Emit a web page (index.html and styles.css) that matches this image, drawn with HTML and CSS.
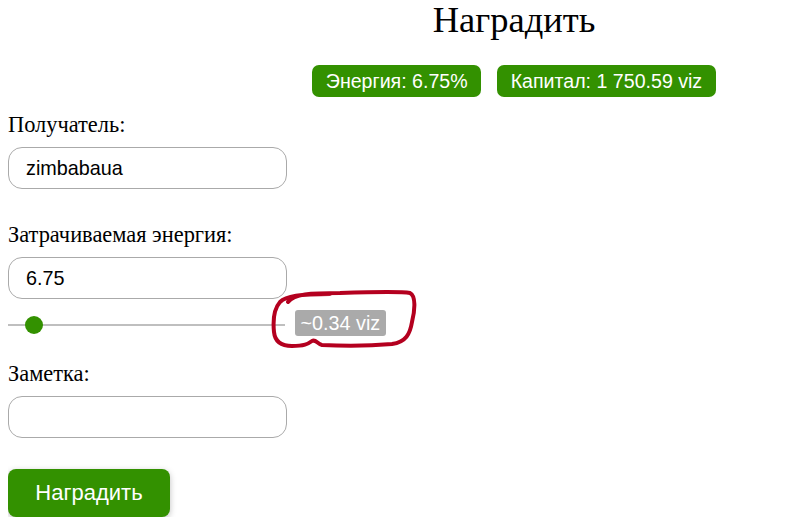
FILE: index.html
```html
<!DOCTYPE html>
<html lang="ru">
<head>
<meta charset="utf-8">
<title>Наградить</title>
<link rel="stylesheet" href="styles.css">
</head>
<body>
<header class="head">
  <h1 class="title">Наградить</h1>
  <div class="badges">
    <span class="badge">Энергия: 6.75%</span>
    <span class="badge">Капитал: 1 750.59 viz</span>
  </div>
</header>
<form class="form">
  <label class="label">Получатель:</label>
  <input class="field" type="text" value="zimbabaua">
  <label class="label label-gap">Затрачиваемая энергия:</label>
  <input class="field" type="text" value="6.75">
  <div class="slider-row">
    <div class="slider">
      <div class="track"></div>
      <div class="thumb"></div>
    </div>
    <span class="amount">~0.34 viz</span>
    <svg class="scribble" width="150" height="66" viewBox="0 0 150 66">
      <path d="M18 14 C 24 6, 40 5, 70 5 C 100 4, 130 3, 140 5 C 146 8, 145 22, 142 34 C 140 46, 136 54, 122 56 C 100 58, 70 58, 52 57 C 47 56, 46 51, 42 53 C 38 56, 34 58, 22 58 C 12 58, 5 54, 4 44 C 3 34, 3 22, 10 14 C 16 8, 30 6, 60 6" fill="none" stroke="#b4001f" stroke-width="4" stroke-linecap="round" stroke-linejoin="round"/>
    </svg>
  </div>
  <label class="label label-gap2">Заметка:</label>
  <input class="field" type="text" value="">
  <button class="submit" type="button">Наградить</button>
</form>
</body>
</html>
```
FILE: styles.css
```css
html, body {
  background: #fff;
}
body {
  margin: 0 8px 8px;
  font-family: "Liberation Serif", "Times New Roman", serif;
  color: #000;
}
.head {
  padding-left: 241px;
  display: flex;
  flex-direction: column;
  align-items: center;
}
.title {
  font-size: 36.5px;
  font-weight: normal;
  margin: 0;
  line-height: 40px;
}
.badges {
  display: flex;
  gap: 16px;
  margin-top: 25px;
}
.badge {
  background: #339100;
  color: #fff;
  font-family: "Liberation Sans", Arial, sans-serif;
  font-size: 19.6px;
  line-height: 32px;
  height: 32px;
  padding: 0 13.5px;
  border-radius: 7px;
}
.form {
  display: flex;
  flex-direction: column;
  align-items: flex-start;
  margin-top: 15px;
}
.label {
  font-size: 22.4px;
  line-height: 25px;
  margin-bottom: 10px;
}
.label-gap {
  margin-top: 33px;
}
.label-gap2 {
  margin-top: 25px;
}
.field {
  box-sizing: border-box;
  width: 279px;
  height: 42px;
  border: 1px solid #aaa;
  border-radius: 14px;
  padding: 0 17px;
  font-family: "Liberation Sans", Arial, sans-serif;
  font-size: 19.8px;
  color: #000;
  margin: 0;
  outline: none;
}
.slider-row {
  position: relative;
  display: flex;
  align-items: center;
  gap: 10px;
  margin-top: 11px;
  height: 26px;
}
.slider {
  position: relative;
  width: 277px;
  height: 26px;
}
.track {
  position: absolute;
  left: 0;
  right: 0;
  top: 14px;
  height: 2px;
  background: #bfbfbf;
}
.thumb {
  position: absolute;
  left: 17px;
  top: 6px;
  width: 18px;
  height: 18px;
  border-radius: 50%;
  background: #339100;
}
.amount {
  background: #aaa;
  color: #fff;
  font-family: "Liberation Sans", Arial, sans-serif;
  font-size: 19.8px;
  line-height: 26px;
  padding: 0 5.5px;
  border-radius: 3px;
}
.scribble {
  position: absolute;
  left: 262px;
  top: -22px;
}
.submit {
  margin-top: 31px;
  width: 162px;
  height: 48px;
  border: none;
  border-radius: 8px;
  background: #339100;
  color: #fff;
  font-family: "Liberation Sans", Arial, sans-serif;
  font-size: 22px;
  box-shadow: 0 2px 6px rgba(0,0,0,0.25);
  cursor: pointer;
}
```
